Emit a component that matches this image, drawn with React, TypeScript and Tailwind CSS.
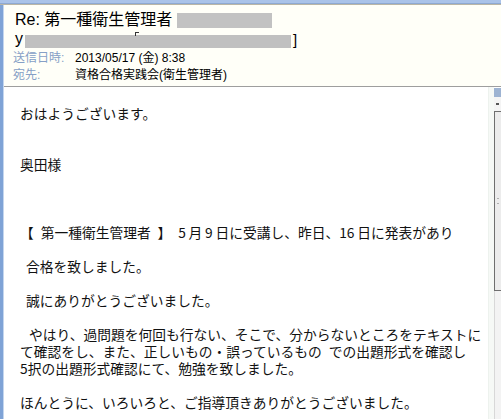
import React from "react";

// half-width space like the original mail font
const S = "\u2002";
const T = "\u2009";

const bodyLines: { text: string; indent?: string }[] = [
  { text: "おはようございます。" },
  { text: "" },
  { text: "" },
  { text: "奥田様" },
  { text: "" },
  { text: "" },
  { text: "" },
  { text: `【${S}第一種衛生管理者${S}】${S}5${T}月${T}9${T}日に受講し、昨日、16${T}日に発表があり` },
  { text: "" },
  { text: "合格を致しました。", indent: "ml-[6px]" },
  { text: "" },
  { text: "誠にありがとうございました。", indent: "ml-[6px]" },
  { text: "" },
  { text: "やはり、過問題を何回も行ない、そこで、分からないところをテキストに", indent: "ml-[9px]" },
  { text: `て確認をし、また、正しいもの・誤っているもの${S}での出題形式を確認し` },
  { text: "5択の出題形式確認にて、勉強を致しました。" },
  { text: "" },
  { text: "ほんとうに、いろいろと、ご指導頂きありがとうございました。" },
];

export default function App() {
  return (
    <div className="w-[501px] h-[419px] overflow-hidden bg-white flex flex-col">
      {/* window top edge */}
      <div className="h-[3px] bg-[#aac3e9]" />
      <div className="h-[1px] bg-[#8ea9d2]" />
      <div className="h-[1px] bg-[#bab6a6]" />

      <div className="flex flex-1 min-h-0">
        {/* left frame stripe */}
        <div className="w-[3px] bg-[#7fa3d6]" />
        <div className="w-[1px] bg-[#c4d6ee]" />

        <div className="flex-1 flex flex-col min-w-0">
          {/* Header */}
          <div
            className="bg-[#fffff8] pt-[4px] pb-[2px] pl-[11px] text-black"
            style={{ fontFamily: '"Liberation Sans", "Noto Sans CJK JP", sans-serif' }}
          >
            <div className="h-[22px] flex items-center text-[16px] leading-[22px] whitespace-nowrap">
              <span>Re: 第一種衛生管理者</span>
              <span className="ml-[5px] w-[95px] h-[15px] bg-[#c2c2c2]" />
            </div>
            <div className="h-[19px] flex items-center text-[16px] leading-[19px] whitespace-nowrap">
              <span className="mt-[-4px]">y</span>
              <div className="relative ml-[2px] mt-[2px] w-[266px] h-[13px] bg-[#c0c0c0]">
                <span className="absolute left-[110px] top-[-3px] w-[4px] h-[4px] border-l border-t border-[#333]" />
              </div>
              <span className="ml-[2px] text-[15px] mt-[-2px]">]</span>
            </div>
            <div className="h-[17px] flex items-center text-[12px] leading-[17px] whitespace-nowrap">
              <span className="w-[62px] text-[#86a0c6] -ml-[2px]">送信日時:</span>
              <span>2013/05/17 (金) 8:38</span>
            </div>
            <div className="h-[17px] flex items-center text-[12px] leading-[17px] whitespace-nowrap">
              <span className="w-[62px] text-[#86a0c6] -ml-[2px]">宛先:</span>
              <span>資格合格実践会(衛生管理者)</span>
            </div>
          </div>
          <div className="h-[1px] bg-[#9e9e9e]" />

          {/* Body */}
          <div className="flex flex-1 min-h-0">
            <div
              className="flex-1 pt-[18px] pl-[16px] text-[13.75px] leading-[17px] text-[#111]"
              style={{ fontFamily: '"Noto Sans CJK JP", sans-serif' }}
            >
              {bodyLines.map((l, i) => (
                <div key={i} className={`h-[17px] whitespace-nowrap ${l.indent ?? ""}`}>
                  {l.text}
                </div>
              ))}
            </div>
            <div className="w-[6px] bg-[#f6f9f6] border-l border-[#edf2ee]" />

            {/* scrollbar */}
            <div className="w-[7px] mt-[1px] flex flex-col bg-[#f0f0f0]">
              <div className="h-[9px] bg-[#9db3d2]" />
              <div className="h-[14px] bg-[#f4f4f4] flex items-center justify-center">
                <span className="w-[3px] h-[2px] bg-[#555]" />
              </div>
              <div className="h-[180px] border-l border-t border-b border-[#6f6f6f] bg-[#ececec] flex items-center justify-center">
                <span className="w-[2px] h-[6px] border-t border-b border-[#b0b0b0]" />
              </div>
              <div className="flex-1 border-l border-[#d8d8d8] bg-[#f3f3f3]" />
            </div>
          </div>
        </div>
      </div>
    </div>
  );
}
